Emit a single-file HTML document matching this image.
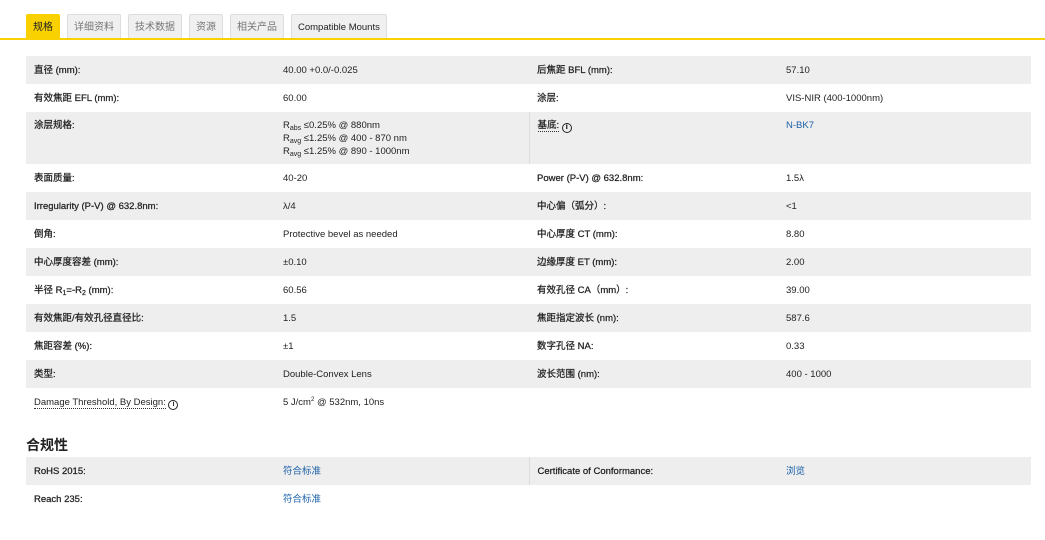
<!DOCTYPE html>
<html><head><meta charset="utf-8"><style>
*{margin:0;padding:0;box-sizing:border-box}
body{width:1045px;height:540px;background:#fff;font-family:"Liberation Sans","Noto Sans CJK SC",sans-serif;font-size:9.5px;color:#222;position:relative;overflow:hidden}
.tabs{position:absolute;top:14px;left:26px;display:flex;gap:7px}
.tab{height:25px;line-height:25px;padding:0 6px;background:#f0f0f0;border:1px solid #ddd;border-bottom:none;color:#777;font-size:10px;border-radius:2px 2px 0 0}
.tab.a{background:#f9d100;border-color:#f9d100;color:#222}
.tab.b{color:#222;font-size:9.5px;padding:0 6px}
.line{position:absolute;top:38px;left:0;width:1045px;height:2px;background:#f9d100}
table{position:absolute;left:26px;width:1005px;border-collapse:collapse}
td{height:28px;vertical-align:middle;padding:2px 8px 0;line-height:12px}
tr.g td{background:#eee}
td.l,td.l2{color:#222;-webkit-text-stroke:0.25px #222}
td.l{width:249px}
td.v{width:254px}
td.l2{width:249px}
td.v2{width:253px}
.link{color:#1a5fa8}
sub{font-size:7px;vertical-align:-2px;line-height:0}
.i{display:inline-block;width:10px;height:10px;border:1.5px solid #222;border-radius:50%;font-size:7px;line-height:7px;text-align:center;font-weight:bold;vertical-align:-1px}
h3{position:absolute;left:26px;top:435px;font-size:14px;font-weight:bold}
.dot{border-bottom:1px dotted #333}
</style></head><body>
<div class="tabs"><div class="tab a">规格</div><div class="tab">详细资料</div><div class="tab">技术数据</div><div class="tab">资源</div><div class="tab">相关产品</div><div class="tab b">Compatible Mounts</div></div>
<div class="line"></div>
<table style="top:56px">
<tr class="g"><td class="l">直径 (mm):</td><td class="v">40.00 +0.0/-0.025</td><td class="l2">后焦距 BFL (mm):</td><td class="v2">57.10</td></tr>
<tr><td class="l">有效焦距 EFL (mm):</td><td class="v">60.00</td><td class="l2">涂层:</td><td class="v2">VIS-NIR (400-1000nm)</td></tr>
<tr class="g"><td class="l" style="height:52px;vertical-align:top;padding-top:8px">涂层规格:</td><td class="v" style="vertical-align:top;padding-top:7px;line-height:13px">R<sub>abs</sub> ≤0.25% @ 880nm<br>R<sub>avg</sub> ≤1.25% @ 400 - 870 nm<br>R<sub>avg</sub> ≤1.25% @ 890 - 1000nm</td><td class="l2" style="vertical-align:top;padding-top:8px;border-left:1px solid #ddd"><span class="dot">基底:</span> <span class="i">i</span></td><td class="v2 link" style="vertical-align:top;padding-top:8px">N-BK7</td></tr>
<tr><td class="l">表面质量:</td><td class="v">40-20</td><td class="l2">Power (P-V) @ 632.8nm:</td><td class="v2">1.5λ</td></tr>
<tr class="g"><td class="l">Irregularity (P-V) @ 632.8nm:</td><td class="v">λ/4</td><td class="l2">中心偏（弧分）:</td><td class="v2">&lt;1</td></tr>
<tr><td class="l">倒角:</td><td class="v">Protective bevel as needed</td><td class="l2">中心厚度 CT (mm):</td><td class="v2">8.80</td></tr>
<tr class="g"><td class="l">中心厚度容差 (mm):</td><td class="v">±0.10</td><td class="l2">边缘厚度 ET (mm):</td><td class="v2">2.00</td></tr>
<tr><td class="l">半径 R<sub>1</sub>=-R<sub>2</sub> (mm):</td><td class="v">60.56</td><td class="l2">有效孔径 CA（mm）:</td><td class="v2">39.00</td></tr>
<tr class="g"><td class="l">有效焦距/有效孔径直径比:</td><td class="v">1.5</td><td class="l2">焦距指定波长 (nm):</td><td class="v2">587.6</td></tr>
<tr><td class="l">焦距容差 (%):</td><td class="v">±1</td><td class="l2">数字孔径 NA:</td><td class="v2">0.33</td></tr>
<tr class="g"><td class="l">类型:</td><td class="v">Double-Convex Lens</td><td class="l2">波长范围 (nm):</td><td class="v2">400 - 1000</td></tr>
<tr><td class="l" style="-webkit-text-stroke:0"><span class="dot">Damage Threshold, By Design:</span> <span class="i">i</span></td><td class="v">5 J/cm<sup style="font-size:6px;line-height:0">2</sup> @ 532nm, 10ns</td><td></td><td></td></tr>
</table>
<h3>合规性</h3>
<table style="top:457px">
<tr class="g"><td class="l">RoHS 2015:</td><td class="v link">符合标准</td><td class="l2" style="border-left:1px solid #ddd">Certificate of Conformance:</td><td class="v2 link">浏览</td></tr>
<tr><td class="l">Reach 235:</td><td class="v link">符合标准</td><td class="l2"></td><td class="v2"></td></tr>
</table>
</body></html>
